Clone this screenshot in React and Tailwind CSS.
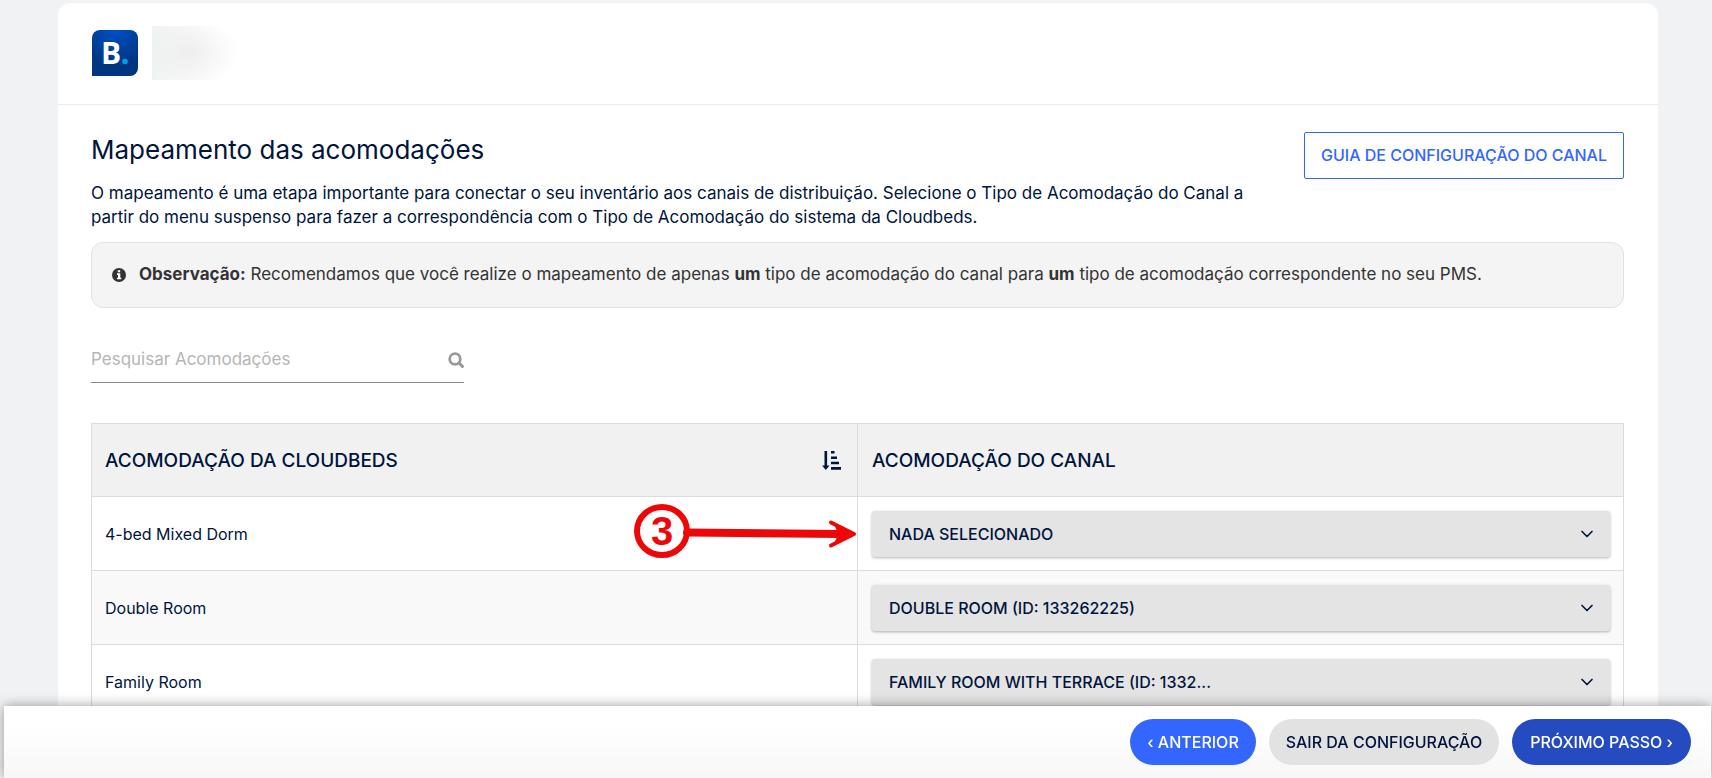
import React, { useState } from 'react';
import { ChevronDown } from 'lucide-react';

const rooms = [
  { id: 'dorm', name: '4-bed Mixed Dorm', channel: 'NADA SELECIONADO' },
  { id: 'double', name: 'Double Room', channel: 'DOUBLE ROOM (ID: 133262225)' },
  { id: 'family', name: 'Family Room', channel: 'FAMILY ROOM WITH TERRACE (ID: 1332...' },
];

const ChannelLogo = () => (
  <svg viewBox="0 0 46 46" className="size-[46px] shrink-0" role="img" aria-label="Booking.com">
    <defs>
      <radialGradient id="logo-bg" cx="0.5" cy="0" r="0.8">
        <stop offset="0" stopColor="#0050c8" />
        <stop offset="1" stopColor="#003580" />
      </radialGradient>
    </defs>
    <path d="M8 0h30a8 8 0 0 1 8 8v30a8 8 0 0 1-8 8H0V8a8 8 0 0 1 8-8z" fill="url(#logo-bg)" />
    <text x="9" y="34" fontFamily="Open Sans, sans-serif" fontWeight="700" fontSize="30" fill="#fff">B</text>
    <circle cx="33" cy="31.500" r="2.800" fill="#009fe3" />
  </svg>
);

const InfoIcon = () => (
  <svg viewBox="0 0 14 14" className="size-[14px] shrink-0" aria-hidden="true">
    <circle cx="7" cy="7" r="7" fill="#333" />
    <path d="M5.800 2.200h2.400v2H5.800zM5 5.300h3.300v4.400h1v1.600H5V9.700h1V6.900H5z" fill="#fff" />
  </svg>
);

const SearchIcon = () => (
  <svg viewBox="0 0 16 16" className="size-4 shrink-0" fill="none" stroke="#999" aria-hidden="true">
    <circle cx="7" cy="7" r="5.300" strokeWidth="2.800" />
    <path d="M11 11l3.400 3.400" strokeWidth="3" strokeLinecap="round" />
  </svg>
);

const SortIcon = () => (
  <svg viewBox="0 0 19 20" className="h-5 w-[19px]" fill="#00143c" aria-hidden="true">
    <path d="M2.500 0h2.600v14.500h2.400L3.800 19 .1 14.500h2.400z" />
    <path d="M9 0h3.500v2.600H9zM9 5.400h6V8H9zM9 10.700h8v2.600H9zM9 16h10v2.700H9z" />
  </svg>
);

// Numbered pointer for the current step
const StepMarker = () => (
  <svg viewBox="0 0 224 60" className="pointer-events-none absolute top-1 right-0 h-[60px] w-[224px]" fill="none" stroke="#ec0808">
    <ellipse cx="29" cy="30" rx="25" ry="24" strokeWidth="6" fill="#fff" />
    <text x="29" y="44" textAnchor="middle" stroke="none" fill="#ec0808" fontFamily="Liberation Sans, sans-serif" fontWeight="700" fontSize="40">3</text>
    <path d="M54 31.500 208 33" strokeWidth="8" strokeLinecap="round" />
    <path d="M198 21.500 221 33 198 44.500" strokeWidth="4" strokeLinecap="round" strokeLinejoin="round" />
    <path d="M202 24.500 222 33 202 41.500 206 33z" fill="#ec0808" strokeWidth="1" />
  </svg>
);

const RoomRow = ({ room, marked }) => (
  <tr className="h-[74px] bg-white even:bg-[#f9f9f9]">
    <td className="relative border border-[#dcdcdc] px-[13px]">
      {room.name}
      {marked && <StepMarker />}
    </td>
    <td className="border border-[#dcdcdc] pr-[13px] pl-[14px]">
      <div className="relative">
        <select
          aria-label={`Acomodação do canal para ${room.name}`}
          className="block h-[46px] w-full appearance-none rounded-[3px] bg-[#e4e4e4] px-[17px] font-medium shadow-[0_1px_3px_rgba(0,0,0,0.3)]"
        >
          <option>{room.channel}</option>
        </select>
        <ChevronDown size={20} className="pointer-events-none absolute top-[13px] right-[13px]" />
      </div>
    </td>
  </tr>
);

const App = () => {
  const [search, setSearch] = useState('');

  return (
    <div className="flex min-h-screen flex-col bg-[#f0f2f4] pt-[3px] font-[Inter,sans-serif] text-base text-[#00143c]">
      <main className="mr-[54px] ml-[58px] grow rounded-t-xl bg-white pb-[56px]">
        <header className="flex items-center gap-[14px] border-b border-[#ebebeb] px-[34px] pt-[23px] pb-6">
          <ChannelLogo />
          <div className="h-[54px] w-24 bg-[radial-gradient(ellipse_50px_38px_at_36px_26px,#eeeeee,transparent),linear-gradient(to_right,#eff4f1,#ffffff_60%)]" />
        </header>

        <div className="pt-[27px] pr-[34px] pl-[33px]">
          <div className="flex items-start justify-between gap-9">
            <div>
              <h1 className="text-[26px] leading-9">Mapeamento das acomodações</h1>
              <p className="mt-3 pt-px text-[17px] leading-6">
                O mapeamento é uma etapa importante para conectar o seu inventário aos canais de distribuição. Selecione o Tipo de Acomodação do Canal a
                <br />
                partir do menu suspenso para fazer a correspondência com o Tipo de Acomodação do sistema da Cloudbeds.
              </p>
            </div>
            <a href="#guia" className="flex h-[47px] shrink-0 items-center rounded-[2px] border border-[#3366ff] px-4 pb-[2px] font-medium text-[#3366ff]">
              GUIA DE CONFIGURAÇÃO DO CANAL
            </a>
          </div>

          <div className="mt-[13px] flex h-[66px] items-center gap-[13px] rounded-xl border border-[#e2e2e2] bg-[#f4f4f4] px-5 text-[17px] text-[#333]">
            <InfoIcon />
            <p>
              <strong>Observação:</strong> Recomendamos que você realize o mapeamento de apenas <strong>um</strong> tipo de acomodação do canal para <strong>um</strong> tipo de acomodação correspondente no seu PMS.
            </p>
          </div>

          <label className="mt-7 flex h-[47px] w-[373px] items-center border-b border-[#888] pt-[2px]">
            <input
              type="text"
              aria-label="Pesquisar Acomodações"
              placeholder="Pesquisar Acomodações"
              value={search}
              onChange={(e) => setSearch(e.target.value)}
              className="min-w-0 grow text-[17px] outline-none placeholder:text-[#b5b5b5]"
            />
            <SearchIcon />
          </label>

          <table className="mt-10 w-full table-fixed border-collapse">
            <thead>
              <tr className="h-[73px] bg-[#f1f1f1] text-left text-[19px]">
                <th className="border border-[#dcdcdc] pt-[2px] pr-4 pl-[13px] font-medium">
                  <div className="flex items-center justify-between">
                    ACOMODAÇÃO DA CLOUDBEDS
                    <button type="button" aria-label="Ordenar">
                      <SortIcon />
                    </button>
                  </div>
                </th>
                <th className="border border-[#dcdcdc] px-[14px] pt-[2px] font-medium">ACOMODAÇÃO DO CANAL</th>
              </tr>
            </thead>
            <tbody>
              {rooms.map((room, i) => (
                <RoomRow key={room.id} room={room} marked={i === 0} />
              ))}
            </tbody>
          </table>
        </div>
      </main>

      {/* Wizard navigation */}
      <footer className="fixed right-px bottom-0 left-1 flex h-[72px] items-center justify-end gap-[13px] bg-linear-to-b from-white from-30% to-[#f7f7f7] px-5 shadow-[0_0_12px_rgba(0,0,0,0.4)]">
        <button type="button" className="h-[46px] rounded-full bg-[#3366ff] px-[17px] font-medium text-white">‹ ANTERIOR</button>
        <button type="button" className="h-[46px] rounded-full bg-[#e2e2e2] px-[17px] font-medium">SAIR DA CONFIGURAÇÃO</button>
        <button type="button" className="h-[46px] rounded-full bg-[#254bc1] px-[18px] font-medium text-white">PRÓXIMO PASSO ›</button>
      </footer>
    </div>
  );
};

export default App;
